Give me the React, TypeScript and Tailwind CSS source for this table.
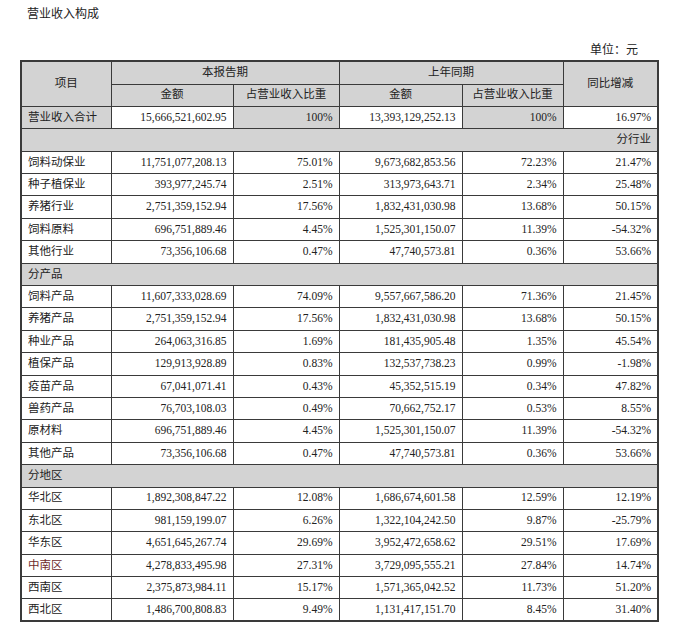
const font = { fontFamily: '"Liberation Serif", "Noto Sans CJK SC", serif' };

type Row = { name: string; cur: string; curPct: string; prev: string; prevPct: string; yoy: string; red?: boolean };

const industry: Row[] = [
  { name: "饲料动保业", cur: "11,751,077,208.13", curPct: "75.01%", prev: "9,673,682,853.56", prevPct: "72.23%", yoy: "21.47%" },
  { name: "种子植保业", cur: "393,977,245.74", curPct: "2.51%", prev: "313,973,643.71", prevPct: "2.34%", yoy: "25.48%" },
  { name: "养猪行业", cur: "2,751,359,152.94", curPct: "17.56%", prev: "1,832,431,030.98", prevPct: "13.68%", yoy: "50.15%" },
  { name: "饲料原料", cur: "696,751,889.46", curPct: "4.45%", prev: "1,525,301,150.07", prevPct: "11.39%", yoy: "-54.32%" },
  { name: "其他行业", cur: "73,356,106.68", curPct: "0.47%", prev: "47,740,573.81", prevPct: "0.36%", yoy: "53.66%" },
];

const products: Row[] = [
  { name: "饲料产品", cur: "11,607,333,028.69", curPct: "74.09%", prev: "9,557,667,586.20", prevPct: "71.36%", yoy: "21.45%" },
  { name: "养猪产品", cur: "2,751,359,152.94", curPct: "17.56%", prev: "1,832,431,030.98", prevPct: "13.68%", yoy: "50.15%" },
  { name: "种业产品", cur: "264,063,316.85", curPct: "1.69%", prev: "181,435,905.48", prevPct: "1.35%", yoy: "45.54%" },
  { name: "植保产品", cur: "129,913,928.89", curPct: "0.83%", prev: "132,537,738.23", prevPct: "0.99%", yoy: "-1.98%" },
  { name: "疫苗产品", cur: "67,041,071.41", curPct: "0.43%", prev: "45,352,515.19", prevPct: "0.34%", yoy: "47.82%" },
  { name: "兽药产品", cur: "76,703,108.03", curPct: "0.49%", prev: "70,662,752.17", prevPct: "0.53%", yoy: "8.55%" },
  { name: "原材料", cur: "696,751,889.46", curPct: "4.45%", prev: "1,525,301,150.07", prevPct: "11.39%", yoy: "-54.32%" },
  { name: "其他产品", cur: "73,356,106.68", curPct: "0.47%", prev: "47,740,573.81", prevPct: "0.36%", yoy: "53.66%" },
];

const regions: Row[] = [
  { name: "华北区", cur: "1,892,308,847.22", curPct: "12.08%", prev: "1,686,674,601.58", prevPct: "12.59%", yoy: "12.19%" },
  { name: "东北区", cur: "981,159,199.07", curPct: "6.26%", prev: "1,322,104,242.50", prevPct: "9.87%", yoy: "-25.79%" },
  { name: "华东区", cur: "4,651,645,267.74", curPct: "29.69%", prev: "3,952,472,658.62", prevPct: "29.51%", yoy: "17.69%" },
  { name: "中南区", cur: "4,278,833,495.98", curPct: "27.31%", prev: "3,729,095,555.21", prevPct: "27.84%", yoy: "14.74%", red: true },
  { name: "西南区", cur: "2,375,873,984.11", curPct: "15.17%", prev: "1,571,365,042.52", prevPct: "11.73%", yoy: "51.20%" },
  { name: "西北区", cur: "1,486,700,808.83", curPct: "9.49%", prev: "1,131,417,151.70", prevPct: "8.45%", yoy: "31.40%" },
];

const cell = "border border-[#3a3a3a] px-[6px] h-[22.4px] leading-none whitespace-nowrap";

const DataRow = ({ r }: { r: Row }) => (
  <tr>
    <td className={`${cell} text-left ${r.red ? "text-[#6e2b2b]" : ""}`}>{r.name}</td>
    <td className={`${cell} text-right`}>{r.cur}</td>
    <td className={`${cell} text-right`}>{r.curPct}</td>
    <td className={`${cell} text-right`}>{r.prev}</td>
    <td className={`${cell} text-right`}>{r.prevPct}</td>
    <td className={`${cell} text-right`}>{r.yoy}</td>
  </tr>
);

const Section = ({ label, right }: { label: string; right?: boolean }) => (
  <tr className="bg-[#d3d3d3]">
    <td colSpan={6} className={`${cell} ${right ? "text-right" : "text-left"}`}>
      {label}
    </td>
  </tr>
);

export default function App() {
  return (
    <div className="w-[679px] h-[627px] bg-white text-[#222] text-[11.5px]" style={font}>
      <div className="pl-[27px] pt-[7px] text-[12px] leading-[14px]">营业收入构成</div>
      <div className="flex justify-end pr-[41px] pt-[22px] text-[12px] leading-[14px]">单位：元</div>
      <div className="pl-[20px] pt-[3px]">
        <table className="border-collapse border-2 border-[#3a3a3a] table-fixed w-[637px]">
          <colgroup>
            <col className="w-[90px]" />
            <col className="w-[122px]" />
            <col className="w-[106px]" />
            <col className="w-[123px]" />
            <col className="w-[101px]" />
            <col className="w-[95px]" />
          </colgroup>
          <thead>
            <tr className="bg-[#d3d3d3]">
              <td rowSpan={2} className={`${cell} text-center`}>项目</td>
              <td colSpan={2} className={`${cell} text-center h-[23px]`}>本报告期</td>
              <td colSpan={2} className={`${cell} text-center h-[23px]`}>上年同期</td>
              <td rowSpan={2} className={`${cell} text-center`}>同比增减</td>
            </tr>
            <tr className="bg-[#d3d3d3]">
              <td className={`${cell} text-center`}>金额</td>
              <td className={`${cell} text-center`}>占营业收入比重</td>
              <td className={`${cell} text-center`}>金额</td>
              <td className={`${cell} text-center`}>占营业收入比重</td>
            </tr>
          </thead>
          <tbody>
            <tr>
              <td className={`${cell} text-left bg-[#d3d3d3]`}>营业收入合计</td>
              <td className={`${cell} text-right`}>15,666,521,602.95</td>
              <td className={`${cell} text-right bg-[#d3d3d3]`}>100%</td>
              <td className={`${cell} text-right`}>13,393,129,252.13</td>
              <td className={`${cell} text-right bg-[#d3d3d3]`}>100%</td>
              <td className={`${cell} text-right`}>16.97%</td>
            </tr>
            <Section label="分行业" right />
            {industry.map((r) => (
              <DataRow key={r.name} r={r} />
            ))}
            <Section label="分产品" />
            {products.map((r) => (
              <DataRow key={r.name} r={r} />
            ))}
            <Section label="分地区" />
            {regions.map((r) => (
              <DataRow key={r.name} r={r} />
            ))}
          </tbody>
        </table>
      </div>
    </div>
  );
}
